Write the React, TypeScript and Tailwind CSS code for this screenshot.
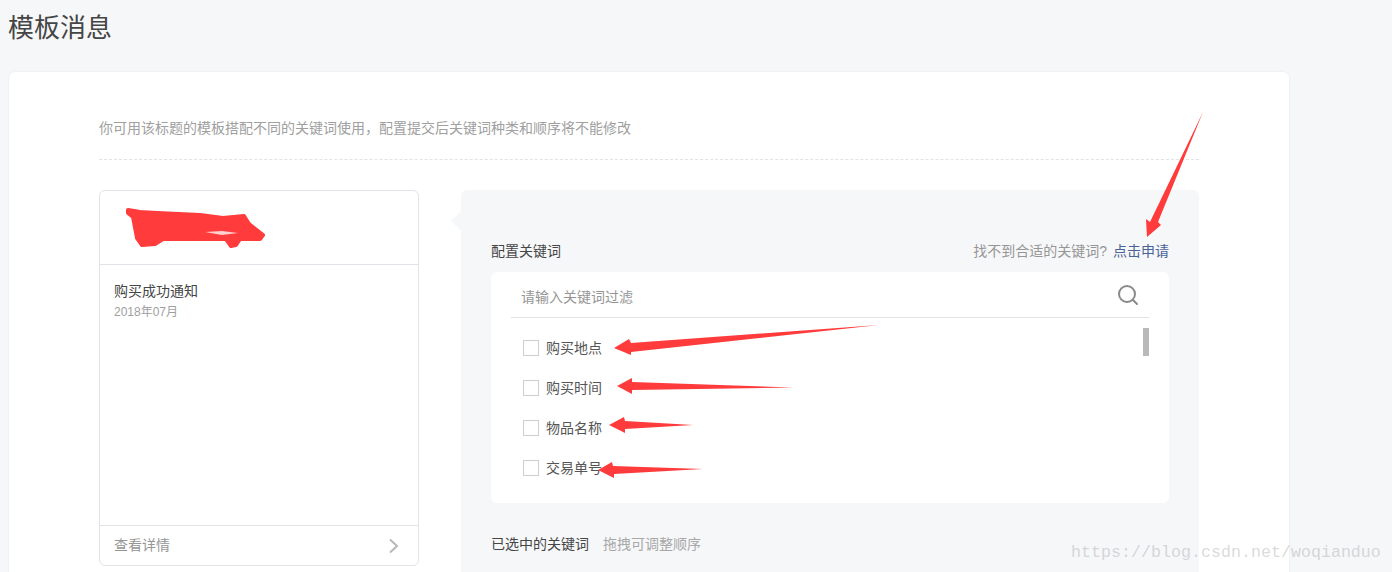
const keywords = ['购买地点', '购买时间', '物品名称', '交易单号'];

function Annotations() {
  return (
    <svg className="absolute left-0 top-0 pointer-events-none" width="1392" height="572" viewBox="0 0 1392 572">
      <g fill="#ff3b3b">
        <polygon points="1203,112 1158,222 1161,225 1147,237 1146,219 1150,222" />
        <polygon points="879,325 631,343 629,339 614,348 631,355 631,352" />
        <polygon points="794,387.5 632,382 632,378 617,386 632,394 632,390" />
        <polygon points="693,425 625,421 624,417 609,425 625,433 625,429" />
        <polygon points="703,469 613,466 612,462 598,470 614,478 614,474" />
        {/* scribble over the redacted title */}
        <path
          d="M128 210 L140 212 L157 213 L200 215 L223 218 L244 216 L249 224 L263 235 L260 239 L240 239 L236 245 L231 246 L226 239 L163 239 L155 244 L142 245 L137 238 L133 217 L128 213 Z"
          stroke="#ff3b3b"
          strokeWidth="4"
          strokeLinejoin="round"
        />
      </g>
      <path d="M205 232 L222 231 L238 233 L222 235 Z" fill="#ffd0d0" />
    </svg>
  );
}

export default function App() {
  return (
    <div className="relative h-[572px] overflow-hidden bg-[#f6f7f9] font-['Liberation_Sans','Noto_Sans_CJK_SC',sans-serif] text-sm text-[#454545]">
      <h1 className="pl-2 pt-[2px] text-[26px] font-normal leading-[52px]">模板消息</h1>
      <div className="mt-[18px] ml-[9px] w-[1280px] rounded-md bg-white px-[90px] pt-[46px] shadow-[0_0_2px_rgba(0,0,0,0.08)]">
        <div className="border-b border-dashed border-[#e2e3e8] pb-[21px] leading-5 text-[#a0a0a0]">
          你可用该标题的模板搭配不同的关键词使用，配置提交后关键词种类和顺序将不能修改
        </div>
        <div className="mt-[30px] flex gap-[42px]">
          {/* preview card */}
          <div className="flex h-[376px] w-[320px] shrink-0 flex-col rounded-md border border-[#e2e3e8] bg-white">
            <div className="h-[74px] border-b border-[#e2e3e8]" />
            <div className="flex-1 px-[14px] pt-4">
              <div className="leading-5">购买成功通知</div>
              <div className="pt-px text-xs leading-5 text-[#a0a0a0]">2018年07月</div>
            </div>
            <div className="flex h-10 items-center justify-between border-t border-[#e2e3e8] pb-[2px] pl-[14px] pr-[18px] text-[#969696]">
              <span>查看详情</span>
              <svg className="mt-[2px]" width="12" height="16" viewBox="0 0 12 16" fill="none" stroke="#b8b8b8" strokeWidth="2">
                <path d="M2 1.5 L9 8 L2 14.5" />
              </svg>
            </div>
          </div>

          {/* keyword panel */}
          <div className="relative h-[420px] flex-1 rounded-md bg-[#f6f7f9] px-[30px] pt-[51px]">
            <div className="absolute left-[-7px] top-6 h-[14px] w-[14px] rotate-45 bg-[#f6f7f9]" />
            <div className="flex items-center justify-between leading-5">
              <span>配置关键词</span>
              <span className="text-[#969696]">
                找不到合适的关键词?<span className="ml-[6px] text-[#4a6296]">点击申请</span>
              </span>
            </div>
            <div className="mt-[11px] h-[231px] rounded-md bg-white px-5">
              <div className="flex h-[46px] items-center justify-between border-b border-[#e2e3e8] pl-[10px] pr-[10px] pt-1 text-[#969696]">
                <span>请输入关键词过滤</span>
                <svg className="mb-1" width="22" height="22" viewBox="0 0 22 22" fill="none" stroke="#8a8a8a" strokeWidth="2">
                  <circle cx="10" cy="10" r="8" />
                  <path d="M15.8 15.8 L20 20" strokeLinecap="round" />
                </svg>
              </div>
              <div className="flex justify-between pt-[10px]">
                <ul className="flex flex-col gap-[20px] pl-3 pt-[10px]">
                  {keywords.map((word) => (
                    <li key={word} className="flex h-5 items-center gap-[7px] text-[#555555]">
                      <span className="h-4 w-4 border border-[#cfcfcf] bg-white" />
                      {word}
                    </li>
                  ))}
                </ul>
                <div className="h-7 w-[6px] bg-[#b9b9b9]" />
              </div>
            </div>
            <div className="mt-[31px] flex gap-[14px] leading-5">
              <span>已选中的关键词</span>
              <span className="text-[#a8a8a8]">拖拽可调整顺序</span>
            </div>
          </div>
        </div>
      </div>
      <Annotations />
      <div className="absolute left-[1071px] top-[543px] font-['Liberation_Mono',monospace] text-[16.67px] leading-5 text-[#a0a0a0]/40">
        https://blog.csdn.net/woqianduo
      </div>
    </div>
  );
}
